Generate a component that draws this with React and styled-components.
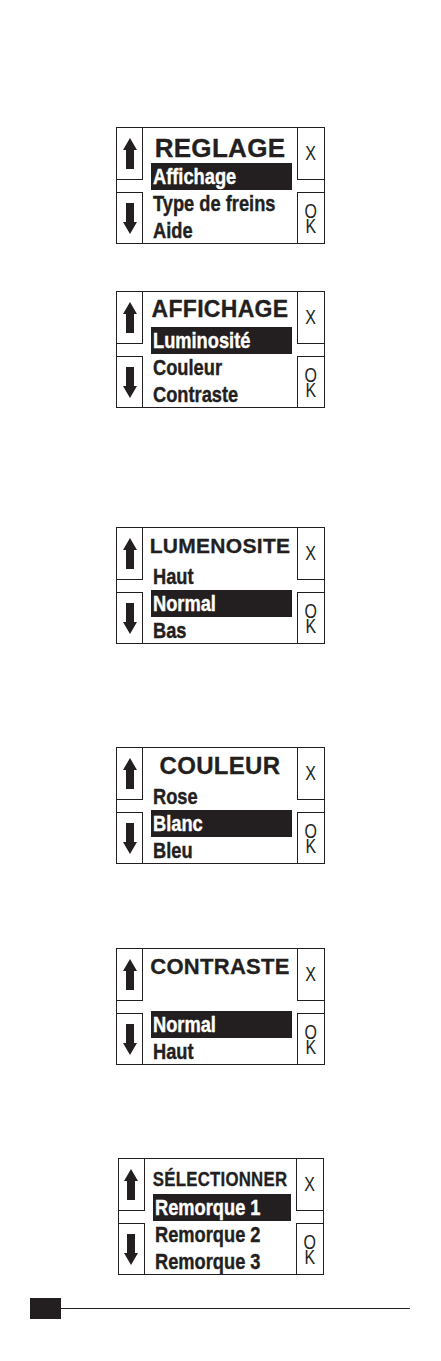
import styled, { createGlobalStyle } from 'styled-components';

const ink = '#231f20';

const GlobalStyle = createGlobalStyle`
  html, body {
    margin: 0;
    padding: 0;
    background: #ffffff;
  }
  body {
    font-family: "Liberation Sans", Arial, sans-serif;
    color: ${ink};
  }
`;

const Page = styled.div`
  width: 441px;
  min-height: 1361px;
  padding-top: 127px;
  box-sizing: border-box;
  display: flex;
  flex-direction: column;
`;

const Screen = styled.div`
  box-sizing: border-box;
  width: ${p => p.$width || 209}px;
  height: 117px;
  margin: ${p => p.$gap || 0}px auto 0;
  border: 1px solid ${ink};
  display: grid;
  grid-template-columns: 26px minmax(0, 1fr) 27px;
`;

const KeyColumn = styled.div`
  display: flex;
  flex-direction: column;
  justify-content: space-between;
`;

const KeyCell = styled.div`
  box-sizing: border-box;
  height: 52px;
  display: flex;
  align-items: center;
  justify-content: center;
  border-${p => (p.$side === 'left' ? 'right' : 'left')}: 1px solid ${ink};
  border-${p => (p.$pos === 'top' ? 'bottom' : 'top')}: 1px solid ${ink};
`;

const KeyLabel = styled.span`
  display: block;
  font-family: "Liberation Sans", Arial, sans-serif;
  font-weight: 400;
  font-size: 20px;
  line-height: 15px;
  white-space: pre-line;
  text-align: center;
  transform: scaleX(0.8);
  color: ${ink};
`;

const Menu = styled.div`
  display: flex;
  flex-direction: column;
  min-width: 0;
`;

const Title = styled.div`
  height: 35px;
  line-height: 35px;
  padding-top: ${p => p.$drop || 0}px;
  box-sizing: border-box;
  display: flex;
  justify-content: center;
  font-family: "Liberation Sans", Arial, sans-serif;
  font-weight: 700;
  font-size: ${p => p.$size}px;
  letter-spacing: 0.3px;
  white-space: nowrap;
  color: ${ink};
`;

const TitleText = styled.span`
  display: inline-block;
  flex: none;
  transform: scaleX(${p => p.$squeeze || 1});
  transform-origin: center;
  -webkit-text-stroke: 0.3px currentColor;
`;

const Item = styled.div`
  height: 27px;
  line-height: 27px;
  margin: 0 5px 0 8px;
  padding-left: 2px;
  font-family: "Liberation Sans", Arial, sans-serif;
  font-weight: 700;
  font-size: 22px;
  white-space: nowrap;
  color: ${p => (p.$active ? '#ffffff' : ink)};
  background: ${p => (p.$active ? ink : 'transparent')};
`;

/* condensed face: the bold sans squeezed to a narrow width */
const ItemText = styled.span`
  display: inline-block;
  transform: scaleX(0.83);
  transform-origin: left center;
  -webkit-text-stroke: 0.4px currentColor;
`;

const Footer = styled.div`
  display: flex;
  align-items: center;
  width: 380px;
  margin: 23px 0 0 30px;
`;

const PageTab = styled.div`
  width: 31px;
  height: 21px;
  background: ${ink};
`;

const Rule = styled.div`
  flex: 1;
  height: 1px;
  background: ${ink};
`;

const Arrow = ({ down }) => (
  <svg width="14" height="31" viewBox="0 0 14 31">
    <polygon
      fill={ink}
      points={
        down
          ? '3,0 11,0 11,19 14,19 7,31 0,19 3,19'
          : '7,0 14,12 11,12 11,31 3,31 3,12 0,12'
      }
    />
  </svg>
);

const screens = [
  { title: 'REGLAGE', size: 26, drop: 3, items: ['Affichage', 'Type de freins', 'Aide'], active: 0, gap: 0 },
  { title: 'AFFICHAGE', size: 23, items: ['Luminosité', 'Couleur', 'Contraste'], active: 0, gap: 47 },
  { title: 'LUMENOSITE', size: 21, items: ['Haut', 'Normal', 'Bas'], active: 1, gap: 119 },
  { title: 'COULEUR', size: 24, items: ['Rose', 'Blanc', 'Bleu'], active: 1, gap: 103 },
  { title: 'CONTRASTE', size: 22, items: ['', 'Normal', 'Haut'], active: 1, gap: 84 },
  { title: 'SÉLECTIONNER', size: 21, squeeze: 0.8, drop: 2, items: ['Remorque 1', 'Remorque 2', 'Remorque 3'], active: 0, gap: 93, width: 206 },
];

const App = () => {
  return (
    <Page>
      <GlobalStyle />
      {screens.map(s => (
        <Screen key={s.title} $gap={s.gap} $width={s.width}>
          <KeyColumn>
            <KeyCell $side="left" $pos="top">
              <Arrow />
            </KeyCell>
            <KeyCell $side="left" $pos="bottom">
              <Arrow down />
            </KeyCell>
          </KeyColumn>
          <Menu>
            <Title $size={s.size} $drop={s.drop}>
              <TitleText $squeeze={s.squeeze}>{s.title}</TitleText>
            </Title>
            {s.items.map((item, i) => (
              <Item key={i} $active={i === s.active}>
                <ItemText>{item}</ItemText>
              </Item>
            ))}
          </Menu>
          <KeyColumn>
            <KeyCell $side="right" $pos="top">
              <KeyLabel>X</KeyLabel>
            </KeyCell>
            <KeyCell $side="right" $pos="bottom">
              <KeyLabel>{'O\nK'}</KeyLabel>
            </KeyCell>
          </KeyColumn>
        </Screen>
      ))}
      <Footer>
        <PageTab />
        <Rule />
      </Footer>
    </Page>
  );
};

export default App;
